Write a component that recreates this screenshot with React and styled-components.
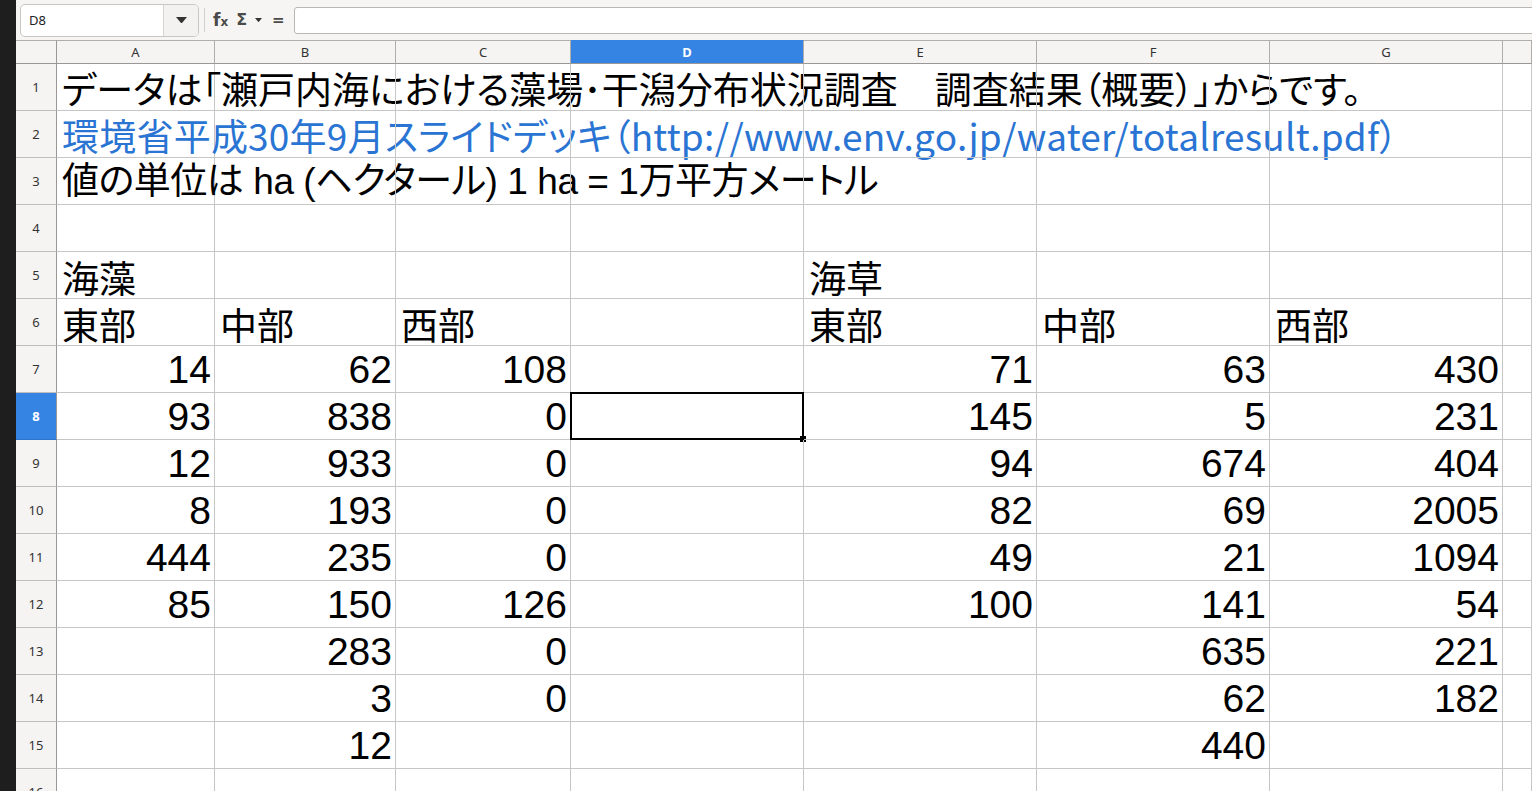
import React from 'react';
import styled, { createGlobalStyle } from 'styled-components';

const GlobalStyle = createGlobalStyle`
  html, body {
    margin: 0;
    padding: 0;
    background: #ffffff;
    overflow: hidden;
  }
  * { box-sizing: border-box; }
`

const Frame = styled.div`
  display: flex;
  width: 1532px;
  height: 791px;
  overflow: hidden;
`

const DarkStrip = styled.div`
  width: 16px;
  flex: none;
  background: #1e1e1e;
`

const Main = styled.div`
  flex: 1;
  display: flex;
  flex-direction: column;
  min-width: 0;
`

const Toolbar = styled.div`
  height: 40px;
  flex: none;
  display: flex;
  align-items: center;
  padding-left: 4px;
  background: #f6f5f4;
  font-family: "Noto Sans", "Liberation Sans", sans-serif;
`

const NameBox = styled.div`
  width: 179px;
  height: 33px;
  display: flex;
  background: #ffffff;
  border: 1px solid #c9c7c4;
  border-radius: 5px;
  overflow: hidden;
`

const NameText = styled.div`
  flex: 1;
  display: flex;
  align-items: center;
  padding-left: 8px;
  font-size: 13px;
  color: #222;
`

const NameDrop = styled.div`
  width: 35px;
  display: flex;
  align-items: center;
  justify-content: center;
  background: #f3f2f0;
  border-left: 1px solid #d6d4d1;
`

const Separator = styled.div`
  width: 1px;
  height: 24px;
  margin: 0 8px 0 5px;
  background: #d3d1ce;
`

const ToolIcon = styled.span`
  font-family: "DejaVu Sans", "Liberation Sans", sans-serif;
  font-weight: bold;
  font-size: ${p => p.$size || 16}px;
  color: #4a4a4a;
  margin-right: ${p => p.$gap || 8}px;
  display: flex;
  align-items: center;
  line-height: 1;
`

const Sub = styled.span`
  font-size: 12px;
  margin-top: 4px;
`

const FormulaInput = styled.div`
  flex: 1;
  height: 27px;
  margin-right: -12px;
  background: #ffffff;
  border: 1px solid #b9b7b4;
  border-radius: 3px;
`

const Sheet = styled.div`
  flex: 1;
  display: grid;
  grid-template-columns: 41px 158px 181px 175px 233px 233px 233px 233px 1fr;
  grid-template-rows: 24px repeat(16, 47px);
  background: #ffffff;
  overflow: hidden;
`

const Corner = styled.div`
  background: #f5f4f2;
  border-top: 1px solid #b0aeab;
  border-right: 1px solid #9a9896;
  border-bottom: 1px solid #9a9896;
`

const ColHead = styled.div`
  display: flex;
  align-items: center;
  justify-content: center;
  font-family: "Noto Sans", "Liberation Sans", sans-serif;
  font-size: 13px;
  font-weight: ${p => (p.$active ? 'bold' : 'normal')};
  color: ${p => (p.$active ? '#ffffff' : '#333333')};
  background: ${p => (p.$active ? '#3584e4' : '#f5f4f2')};
  border-top: 1px solid ${p => (p.$active ? '#3584e4' : '#b0aeab')};
  border-right: 1px solid #b0aeab;
  border-bottom: 1px solid #9a9896;
`

const RowHead = styled.div`
  display: flex;
  align-items: center;
  justify-content: center;
  font-family: "Noto Sans", "Liberation Sans", sans-serif;
  font-size: 13px;
  font-weight: ${p => (p.$active ? 'bold' : 'normal')};
  color: ${p => (p.$active ? '#ffffff' : '#333333')};
  background: ${p => (p.$active ? '#3584e4' : '#f5f4f2')};
  border-right: 1px solid #9a9896;
  border-bottom: 1px solid ${p => (p.$active ? '#2f74c9' : '#c0bebb')};
`

const Cell = styled.div`
  position: relative;
  display: flex;
  align-items: flex-end;
  justify-content: ${p => (p.$num ? 'flex-end' : 'flex-start')};
  padding: 0 ${p => (p.$num ? 3 : 0)}px ${p => p.$lift}px ${p => (p.$num ? 0 : 5)}px;
  border-right: 1px solid #c6c6c6;
  border-bottom: 1px solid #c6c6c6;
  white-space: nowrap;
  overflow: visible;
  min-width: 0;
`

const Value = styled.span`
  font-family: ${p => (p.$link ? '"Noto Sans CJK JP", sans-serif' : '"Liberation Sans", "Noto Sans CJK JP", sans-serif')};
  font-size: ${p => (p.$num ? 39 : 37)}px;
  line-height: ${p => (p.$num ? 38 : 35)}px;
  letter-spacing: ${p => p.$spacing || 0}px;
  font-feature-settings: ${p => (p.$num ? 'normal' : '"palt"')};
  color: ${p => (p.$link ? '#2a74d3' : '#000000')};
`

const Cursor = styled.div`
  position: absolute;
  left: -1px;
  top: -1px;
  right: -1px;
  bottom: -1px;
  border: 2px solid #000000;
  pointer-events: none;
`

const Handle = styled.div`
  position: absolute;
  right: -4px;
  bottom: -4px;
  width: 6px;
  height: 6px;
  background: #000000;
`

const columns = ['A', 'B', 'C', 'D', 'E', 'F', 'G', '']

const t = (v, extra = {}) => ({ v, ...extra })
const n = v => (v === null ? null : { v: String(v), num: true })

const rows = [
  [t('データは「瀬戸内海における藻場･干潟分布状況調査　調査結果（概要）」からです。', { lift: 1 })],
  [t('環境省平成30年9月スライドデッキ（http://www.env.go.jp/water/totalresult.pdf）', { link: true, lift: 4, spacing: 0.22 })],
  [t('値の単位は ha (ヘクタール) 1 ha = 1万平方メートル', { lift: 5, spacing: -0.45 })],
  [],
  [t('海藻'), null, null, null, t('海草')],
  [t('東部'), t('中部'), t('西部'), null, t('東部'), t('中部'), t('西部')],
  [14, 62, 108, null, 71, 63, 430].map(n),
  [93, 838, 0, null, 145, 5, 231].map(n),
  [12, 933, 0, null, 94, 674, 404].map(n),
  [8, 193, 0, null, 82, 69, 2005].map(n),
  [444, 235, 0, null, 49, 21, 1094].map(n),
  [85, 150, 126, null, 100, 141, 54].map(n),
  [null, 283, 0, null, null, 635, 221].map(n),
  [null, 3, 0, null, null, 62, 182].map(n),
  [null, 12, null, null, null, 440, null].map(n),
  [],
]

const activeRow = 8
const activeCol = 3

const DownArrow = ({ size = 9 }) => (
  <svg width={size} height={size * 0.6} viewBox="0 0 10 6">
    <path d="M0 0 L10 0 L5 6 Z" fill="#333" />
  </svg>
)

export default function App() {
  return (
    <>
      <GlobalStyle />
      <Frame>
        <DarkStrip />
        <Main>
          <Toolbar>
            <NameBox>
              <NameText>D8</NameText>
              <NameDrop>
                <DownArrow size={11} />
              </NameDrop>
            </NameBox>
            <Separator />
            <ToolIcon $size={17} $gap={8}>
              f<Sub>x</Sub>
            </ToolIcon>
            <ToolIcon $size={16} $gap={8}>Σ</ToolIcon>
            <ToolIcon $gap={10}>
              <DownArrow size={7} />
            </ToolIcon>
            <ToolIcon $size={15} $gap={9}>=</ToolIcon>
            <FormulaInput />
          </Toolbar>
          <Sheet>
            <Corner />
            {columns.map((c, i) => (
              <ColHead key={'h' + i} $active={i === activeCol}>
                {c}
              </ColHead>
            ))}
            {rows.map((row, r) => (
              <React.Fragment key={'r' + r}>
                <RowHead $active={r + 1 === activeRow}>{r + 1}</RowHead>
                {columns.map((_, c) => {
                  const cell = row[c]
                  const selected = r + 1 === activeRow && c === activeCol
                  const lift = cell ? (cell.lift !== undefined ? cell.lift : cell.num ? 3 : 0) : 0
                  return (
                    <Cell key={c} $num={cell && cell.num} $lift={lift}>
                      {cell && (
                        <Value $num={cell.num} $link={cell.link} $spacing={cell.spacing}>
                          {cell.v}
                        </Value>
                      )}
                      {selected && (
                        <Cursor>
                          <Handle />
                        </Cursor>
                      )}
                    </Cell>
                  )
                })}
              </React.Fragment>
            ))}
          </Sheet>
        </Main>
      </Frame>
    </>
  )
}
